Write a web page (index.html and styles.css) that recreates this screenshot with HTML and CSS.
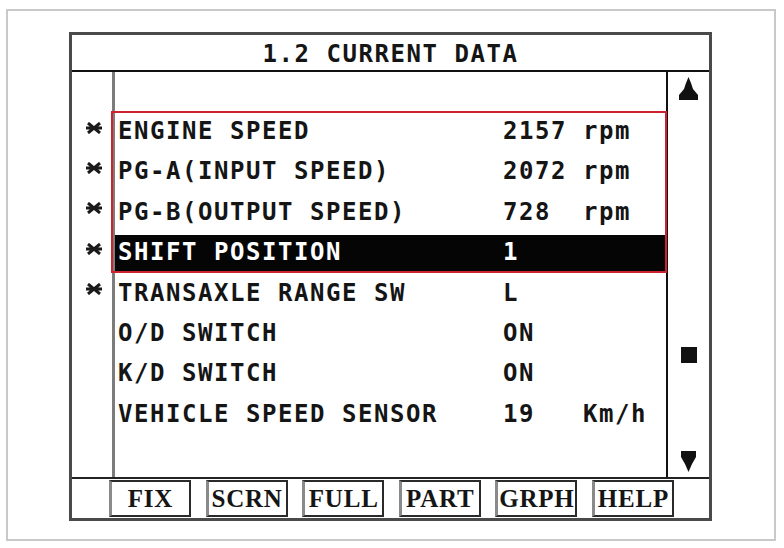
FILE: index.html
```html
<!DOCTYPE html>
<html>
	<head>
		<meta charset="utf-8">
		<title>1.2 CURRENT DATA</title>
		<link rel="stylesheet" href="styles.css">
	</head>
	<body>
		<div class="sheet">
			<div class="device">
				<div class="title">1.2 CURRENT DATA</div>
				<div class="main">
					<div class="marks">
						<div class="mark"><svg width="16" height="12" viewBox="0 0 16 12"><path d="M2 1 L14 11 M14 1 L2 11 M0 6 L16 6" stroke="#1a1a1a" stroke-width="3" fill="none"/></svg></div>
						<div class="mark"><svg width="16" height="12" viewBox="0 0 16 12"><path d="M2 1 L14 11 M14 1 L2 11 M0 6 L16 6" stroke="#1a1a1a" stroke-width="3" fill="none"/></svg></div>
						<div class="mark"><svg width="16" height="12" viewBox="0 0 16 12"><path d="M2 1 L14 11 M14 1 L2 11 M0 6 L16 6" stroke="#1a1a1a" stroke-width="3" fill="none"/></svg></div>
						<div class="mark"><svg width="16" height="12" viewBox="0 0 16 12"><path d="M2 1 L14 11 M14 1 L2 11 M0 6 L16 6" stroke="#1a1a1a" stroke-width="3" fill="none"/></svg></div>
						<div class="mark"><svg width="16" height="12" viewBox="0 0 16 12"><path d="M2 1 L14 11 M14 1 L2 11 M0 6 L16 6" stroke="#1a1a1a" stroke-width="3" fill="none"/></svg></div>
					</div>
					<div class="list">
						<div class="row"><span>ENGINE SPEED</span><span>2157</span><span>rpm</span></div>
						<div class="row"><span>PG-A(INPUT SPEED)</span><span>2072</span><span>rpm</span></div>
						<div class="row"><span>PG-B(OUTPUT SPEED)</span><span>728</span><span>rpm</span></div>
						<div class="row sel"><span>SHIFT POSITION</span><span>1</span><span></span></div>
						<div class="row"><span>TRANSAXLE RANGE SW</span><span>L</span><span></span></div>
						<div class="row"><span>O/D SWITCH</span><span>ON</span><span></span></div>
						<div class="row"><span>K/D SWITCH</span><span>ON</span><span></span></div>
						<div class="row"><span>VEHICLE SPEED SENSOR</span><span>19</span><span>Km/h</span></div>
					</div>
					<div class="scroll">
						<svg class="up" width="19" height="23" viewBox="0 0 19 23"><polygon points="9.5,0 12,6 14,12 19,18 19,23 0,23 0,18 5,12 7,6" fill="#111"/></svg>
						<div class="thumb"></div>
						<svg class="down" width="15" height="21" viewBox="0 0 15 21"><polygon points="0,0 15,0 15,6 11,13 7.5,21 4,13 0,6" fill="#111"/></svg>
					</div>
					<div class="callout"></div>
				</div>
				<div class="keys">
					<div class="key">FIX</div>
					<div class="key">SCRN</div>
					<div class="key">FULL</div>
					<div class="key">PART</div>
					<div class="key">GRPH</div>
					<div class="key">HELP</div>
				</div>
			</div>
		</div>
	</body>
</html>
```

FILE: styles.css
```css
			html {
				height: 100%;
			}
			body {
				margin: 0;
				background-color: #fff;
			}
			.sheet {
				box-sizing: border-box;
				width: 770px;
				height: 532px;
				margin: 9px 0 0 6px;
				padding: 21px 0 0 61px;
				border: 2px solid #c9c9c9;
			}
			.device {
				box-sizing: border-box;
				width: 643px;
				height: 489px;
				border: 3px solid #4a4a4a;
				color: #151515;
				font-family: "DejaVu Sans Mono", monospace;
				font-weight: bold;
				font-size: 24px;
				letter-spacing: 1.55px;
			}
			.title {
				height: 35px;
				line-height: 38px;
				text-align: center;
				border-bottom: 2px solid #111;
			}
			.main {
				position: relative;
				display: flex;
				height: 405px;
				border-bottom: 2px solid #222;
			}
			.marks {
				box-sizing: border-box;
				width: 43px;
				padding: 39px 0 0 4px;
				border-right: 3px solid #7c7c7c;
			}
			.mark {
				height: 40.4px;
				display: flex;
				align-items: center;
				justify-content: center;
			}
			.mark svg {
				margin-top: -7px;
			}
			.list {
				flex: 1;
				padding: 39px 0 0 3px;
				border-right: 2px solid #111;
			}
			.row {
				display: grid;
				grid-template-columns: 385px 80px auto;
				height: 40.4px;
				line-height: 40.4px;
				white-space: pre;
			}
			.row.sel {
				color: #fff;
				margin-left: -3px;
				padding-left: 3px;
				background: linear-gradient(#050505, #050505) 0 3px / 100% 36px no-repeat;
			}
			.scroll {
				width: 41px;
				display: flex;
				flex-direction: column;
				align-items: center;
				padding: 5px 0;
				box-sizing: border-box;
			}
			.thumb {
				width: 16px;
				height: 16px;
				margin-top: 247px;
				background-color: #111;
			}
			.scroll .down {
				margin-top: auto;
			}
			.callout {
				position: absolute;
				top: 39px;
				left: 39px;
				width: 556px;
				height: 162px;
				box-sizing: border-box;
				border: 2px solid #cf2230;
			}
			.keys {
				display: flex;
				align-items: flex-start;
				gap: 14.6px;
				height: 39px;
				padding: 1px 0 0 37px;
				box-sizing: border-box;
			}
			.key {
				box-sizing: border-box;
				width: 82px;
				height: 37px;
				border: 2px solid #2a2a2a;
				border-left: 3px solid #8a8a8a;
				font-family: "Liberation Serif", serif;
				font-size: 25px;
				letter-spacing: 0.8px;
				line-height: 34px;
				text-align: center;
			}
```
